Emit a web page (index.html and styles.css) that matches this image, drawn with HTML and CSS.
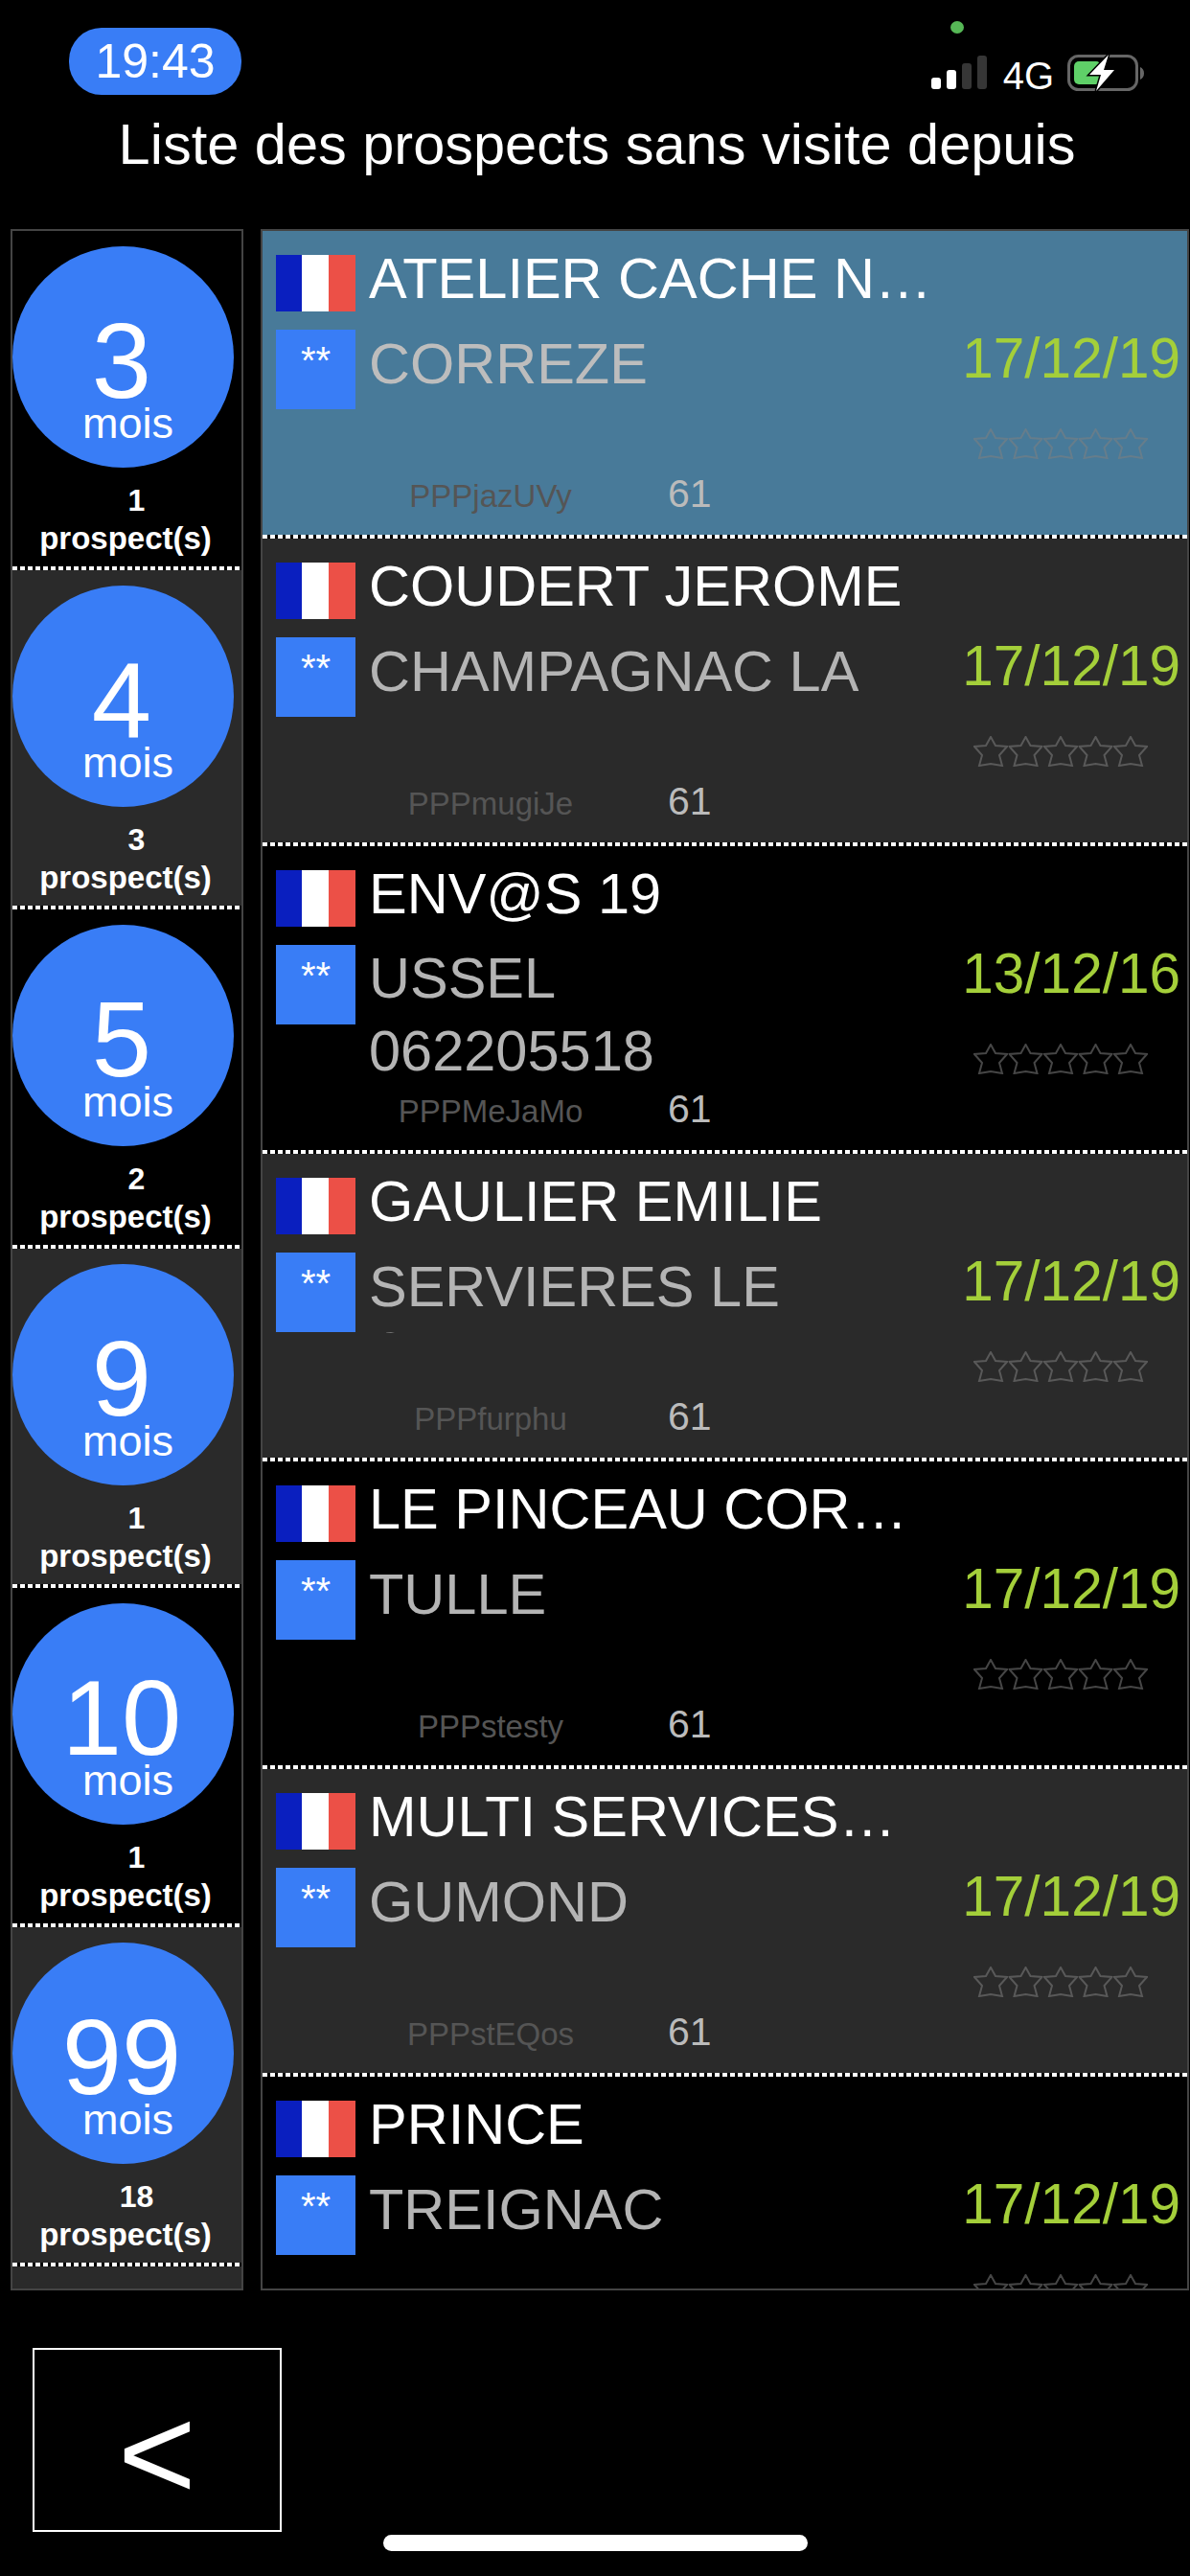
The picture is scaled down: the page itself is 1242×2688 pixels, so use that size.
FILE: index.html
```html
<!DOCTYPE html>
<html lang="fr">
<head>
    <meta charset="UTF-8">
    <meta name="viewport" content="width=device-width, initial-scale=1.0">
    <title>Liste des prospects</title>
    <link rel="stylesheet" href="styles.css">
</head>
<body>
    <svg class="defs" width="0" height="0">
        <symbol id="star" viewBox="0 0 36 32">
            <polygon points="18,1 23,10 35,11 27,20 30,31 18,29 6,31 9,20 1,11 13,10"/>
        </symbol>
        <symbol id="stars" viewBox="0 0 182 33">
            <use href="#star" x="0" y="0" width="36" height="32"/>
            <use href="#star" x="36.5" y="0" width="36" height="32"/>
            <use href="#star" x="73" y="0" width="36" height="32"/>
            <use href="#star" x="109.5" y="0" width="36" height="32"/>
            <use href="#star" x="146" y="0" width="36" height="32"/>
        </symbol>
        <symbol id="flag" viewBox="0 0 83 59">
            <rect width="27" height="59" fill="#0a1fbf"/>
            <rect x="27" width="28" height="59" fill="#fff"/>
            <rect x="55" width="28" height="59" fill="#ec5047"/>
        </symbol>
    </svg>

    <div class="statusbar">
        <div class="clock">19:43</div>
        <div class="status-icons">
            <div class="signal">
                <span class="bar bar-1"></span>
                <span class="bar bar-2"></span>
                <span class="bar bar-3 off"></span>
                <span class="bar bar-4 off"></span>
            </div>
            <span class="network">4G</span>
            <svg class="battery" width="90" height="50" viewBox="0 0 90 50">
                <rect x="5.500" y="8.500" width="71" height="35" rx="10" fill="none" stroke="#666" stroke-width="3"/>
                <path d="M80 20c2.500 1 4 3.500 4 6.500s-1.500 5.500-4 6.500z" fill="#666"/>
                <rect x="11" y="14" width="28" height="24" rx="5" fill="#5fd068"/>
                <path d="M47 7L27 28H39L34 45L53 23H42Z" fill="#fff" stroke="#000" stroke-width="3" paint-order="stroke"/>
            </svg>
        </div>
    </div>
    <span class="camera-dot"></span>

    <h1 class="title">Liste des prospects sans visite depuis</h1>

    <div class="content">
        <div class="periods">
            <div class="period dotted">
                <div class="bubble"><span class="months">3</span><span class="unit">mois</span></div>
                <div class="count">1</div>
                <div class="count-label">prospect(s)</div>
            </div>
            <div class="period dotted">
                <div class="bubble"><span class="months">4</span><span class="unit">mois</span></div>
                <div class="count">3</div>
                <div class="count-label">prospect(s)</div>
            </div>
            <div class="period dotted">
                <div class="bubble"><span class="months">5</span><span class="unit">mois</span></div>
                <div class="count">2</div>
                <div class="count-label">prospect(s)</div>
            </div>
            <div class="period dotted">
                <div class="bubble"><span class="months">9</span><span class="unit">mois</span></div>
                <div class="count">1</div>
                <div class="count-label">prospect(s)</div>
            </div>
            <div class="period dotted">
                <div class="bubble"><span class="months">10</span><span class="unit">mois</span></div>
                <div class="count">1</div>
                <div class="count-label">prospect(s)</div>
            </div>
            <div class="period dotted">
                <div class="bubble"><span class="months">99</span><span class="unit">mois</span></div>
                <div class="count">18</div>
                <div class="count-label">prospect(s)</div>
            </div>
        </div>

        <div class="prospects">
            <div class="prospect dotted selected">
                <svg class="flag"><use href="#flag"/></svg>
                <div class="name">ATELIER CACHE N…</div>
                <div class="badge">**</div>
                <div class="city">CORREZE</div>
                <div class="side">
                    <div class="date">17/12/19</div>
                    <svg class="stars"><use href="#stars"/></svg>
                </div>
                <div class="meta"><span class="code">PPPjazUVy</span><span class="num">61</span></div>
            </div>
            <div class="prospect dotted">
                <svg class="flag"><use href="#flag"/></svg>
                <div class="name">COUDERT JEROME</div>
                <div class="badge">**</div>
                <div class="city">CHAMPAGNAC LA</div>
                <div class="side">
                    <div class="date">17/12/19</div>
                    <svg class="stars"><use href="#stars"/></svg>
                </div>
                <div class="meta"><span class="code">PPPmugiJe</span><span class="num">61</span></div>
            </div>
            <div class="prospect dotted">
                <svg class="flag"><use href="#flag"/></svg>
                <div class="name">ENV@S 19</div>
                <div class="badge">**</div>
                <div class="city city-open">USSEL 062205518</div>
                <div class="side">
                    <div class="date">13/12/16</div>
                    <svg class="stars"><use href="#stars"/></svg>
                </div>
                <div class="meta"><span class="code">PPPMeJaMo</span><span class="num">61</span></div>
            </div>
            <div class="prospect dotted">
                <svg class="flag"><use href="#flag"/></svg>
                <div class="name">GAULIER EMILIE</div>
                <div class="badge">**</div>
                <div class="city">SERVIERES LE CHATEAU</div>
                <div class="side">
                    <div class="date">17/12/19</div>
                    <svg class="stars"><use href="#stars"/></svg>
                </div>
                <div class="meta"><span class="code">PPPfurphu</span><span class="num">61</span></div>
            </div>
            <div class="prospect dotted">
                <svg class="flag"><use href="#flag"/></svg>
                <div class="name">LE PINCEAU COR…</div>
                <div class="badge">**</div>
                <div class="city">TULLE</div>
                <div class="side">
                    <div class="date">17/12/19</div>
                    <svg class="stars"><use href="#stars"/></svg>
                </div>
                <div class="meta"><span class="code">PPPstesty</span><span class="num">61</span></div>
            </div>
            <div class="prospect dotted">
                <svg class="flag"><use href="#flag"/></svg>
                <div class="name">MULTI SERVICES…</div>
                <div class="badge">**</div>
                <div class="city">GUMOND</div>
                <div class="side">
                    <div class="date">17/12/19</div>
                    <svg class="stars"><use href="#stars"/></svg>
                </div>
                <div class="meta"><span class="code">PPPstEQos</span><span class="num">61</span></div>
            </div>
            <div class="prospect dotted">
                <svg class="flag"><use href="#flag"/></svg>
                <div class="name">PRINCE</div>
                <div class="badge">**</div>
                <div class="city">TREIGNAC</div>
                <div class="side">
                    <div class="date">17/12/19</div>
                    <svg class="stars"><use href="#stars"/></svg>
                </div>
            </div>
        </div>
    </div>

    <button class="back" type="button">&lt;</button>
    <div class="home-bar"></div>
</body>
</html>
```

FILE: styles.css
```css
* {
    margin: 0;
    padding: 0;
    box-sizing: border-box;
}

body {
    position: relative;
    width: 1242px;
    height: 2688px;
    overflow: hidden;
    background-color: #000;
    color: #fff;
    font-family: "Liberation Sans", Arial, sans-serif;
}

.defs {
    position: absolute;
}

/* status bar */
.statusbar {
    display: flex;
    justify-content: space-between;
    align-items: flex-start;
    height: 116px;
    padding: 29px 42px 0 72px;
}

.clock {
    display: flex;
    align-items: center;
    justify-content: center;
    width: 180px;
    height: 70px;
    border-radius: 34px;
    background-color: #397df6;
    font-size: 50px;
}

.status-icons {
    display: flex;
    align-items: flex-start;
    margin-top: 21px;
}

.signal {
    display: flex;
    align-items: flex-end;
    gap: 6px;
    height: 35px;
    margin-top: 8px;
}

.bar {
    width: 10px;
    border-radius: 3px;
    background-color: #fff;
}

.bar.off {
    background-color: #363636;
}

.bar-1 { height: 12px; }
.bar-2 { height: 20px; }
.bar-3 { height: 27px; }
.bar-4 { height: 35px; }

.network {
    margin: 9px 10px 0 17px;
    font-size: 40px;
    line-height: 40px;
}

.camera-dot {
    position: absolute;
    top: 22px;
    left: 992px;
    width: 14px;
    height: 13px;
    border-radius: 50%;
    background-color: #56b856;
}

.title {
    height: 70px;
    padding-left: 4px;
    font-size: 59.5px;
    font-weight: normal;
    line-height: 70px;
    text-align: center;
}

/* two panels */
.content {
    display: flex;
    gap: 18px;
    height: 2151px;
    margin: 53px 1px 0 11px;
}

.periods,
.prospects {
    border: 2px solid #444;
    overflow: hidden;
}

.periods {
    width: 243px;
    background-color: #2a2a2a;
}

.prospects {
    flex: 1;
    background-color: #000;
}

/* white squares along the bottom edge of each row */
.dotted {
    background-image:
        linear-gradient(90deg, #fff 5px, transparent 5px),
        linear-gradient(#000, #000);
    background-size: 8px 4px, 100% 4px;
    background-position: left bottom;
    background-repeat: repeat-x, no-repeat;
}

.period {
    height: 354px;
    padding-top: 16px;
    background-color: #000;
}

.period:nth-child(even) {
    background-color: #2a2a2a;
}

.bubble {
    display: flex;
    flex-direction: column;
    align-items: center;
    width: 231px;
    height: 231px;
    padding-top: 70px;
    border-radius: 50%;
    background-color: #397df6;
}

.months {
    margin-right: 3px;
    font-size: 112px;
    line-height: 100px;
}

.unit {
    margin-top: -8px;
    padding-left: 10px;
    font-size: 45px;
    line-height: 45px;
}

.count {
    margin-top: 14px;
    padding-left: 20px;
    font-size: 32px;
    font-weight: bold;
    line-height: 40px;
    text-align: center;
}

.count-label {
    padding-right: 3px;
    font-size: 33px;
    font-weight: bold;
    line-height: 40px;
    text-align: center;
}

/* prospect rows */
.prospect {
    display: grid;
    grid-template-columns: 83px 1fr 232px;
    grid-template-rows: 59px 83px auto;
    column-gap: 14px;
    row-gap: 19px;
    height: 321px;
    padding: 25px 7px 0 14px;
    background-color: #000;
}

.prospect:nth-child(even) {
    background-color: #2a2a2a;
}

.prospect.selected {
    background-color: #487a99;
}

.flag {
    width: 83px;
    height: 59px;
    filter: blur(0.6px);
}

.name {
    grid-column: 2 / 4;
    margin-top: -5px;
    font-size: 59.5px;
    line-height: 59px;
    white-space: nowrap;
}

.badge {
    padding-top: 12px;
    background-color: #397df6;
    font-size: 40px;
    line-height: 40px;
    text-align: center;
}

.city {
    height: 84px;
    padding-top: 1px;
    overflow: hidden;
    color: #b4b4b4;
    font-size: 59.5px;
    line-height: 69px;
}

.selected .city {
    color: #bdbdbd;
}

.city-open {
    height: auto;
    margin-top: -3px;
    padding-top: 0;
    overflow: visible;
    width: 420px;
    line-height: 76px;
}

.side {
    grid-row: 2 / 4;
    grid-column: 3;
    padding-top: 1px;
    text-align: right;
}

.date {
    color: #a4cf3a;
    font-size: 58.5px;
    line-height: 58px;
    white-space: nowrap;
}

.stars {
    display: block;
    width: 182px;
    height: 33px;
    margin: 44px 0 0 16px;
    fill: none;
    stroke: rgba(128, 128, 128, 0.55);
    stroke-width: 2;
}

.meta {
    grid-column: 1 / 3;
    display: flex;
    align-items: baseline;
    margin-top: 46px;
    padding-left: 52px;
    line-height: 46px;
}

.code {
    width: 344px;
    color: #555;
    font-size: 33px;
    text-align: center;
}

.num {
    margin-left: 13px;
    color: #bbb;
    font-size: 41px;
}

/* bottom */
.back {
    display: block;
    width: 260px;
    height: 192px;
    margin: 60px 0 0 34px;
    padding-top: 28px;
    border: 2px solid #fff;
    background-color: #000;
    color: #fff;
    font-family: inherit;
    font-size: 140px;
    line-height: 1;
}

.home-bar {
    position: absolute;
    top: 2645px;
    left: 400px;
    width: 443px;
    height: 17px;
    border-radius: 9px;
    background-color: #fff;
}
```
